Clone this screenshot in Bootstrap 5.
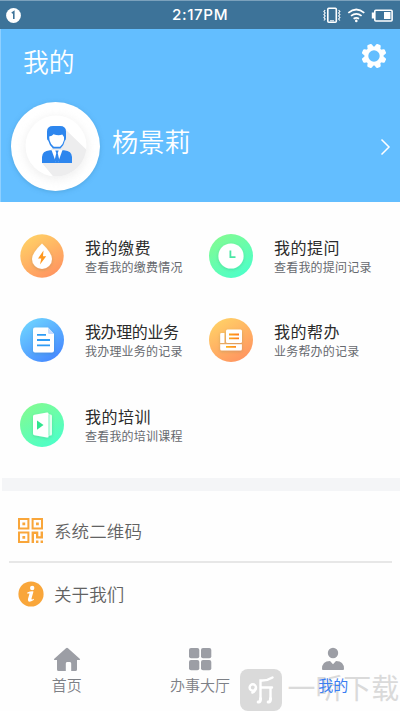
<!DOCTYPE html>
<html lang="zh-CN">
<head>
<meta charset="utf-8">
<meta name="viewport" content="width=device-width, initial-scale=1">
<title>我的</title>
<link href="https://cdn.jsdelivr.net/npm/bootstrap@5.3.0/dist/css/bootstrap.min.css" rel="stylesheet">
<style>
body{font-family:"Noto Sans CJK SC",sans-serif;width:400px;height:711px;overflow:hidden;background:#fefefe;line-height:1}
svg{display:block;flex:none}
.status{height:29px;background:#3d7399;border-top:1px solid #7ba1bc;padding:0 7px 0 6px}
.notice{width:166px}
.clock{font:500 15.2px/20px Inter,sans-serif;letter-spacing:.6px}
.hero{height:173px;background:#63beff;border-left:1px solid #8fd0ff}
.hero-title{font-size:25.8px;font-weight:350;line-height:30px;padding:17px 13px 0 22px}
.gear{margin-top:-3px}
.profile{padding:26px 9px 0 10px}
.hero-name{font-size:26.2px;font-weight:350;line-height:30px;margin:-11px 0 0 12px}
.avatar{width:89px;height:89px;background:#fff;box-shadow:0 1px 4px #3f91c580}
.tiles{height:276px;padding:31.5px 0 0 20px}
.tile{height:84.5px}
.tile-col{width:189px}
.tile-text{padding:3px 0 0 21px}
.tile-title{font-size:16px;line-height:20px;color:#2b2b2b;letter-spacing:.5px}
.tile-title.tight{letter-spacing:-.4px}
.tile-sub{font-size:12px;line-height:19px;color:#66696e;letter-spacing:.2px}
.band{height:13px;background:#f4f5f7;margin-left:2px}
.entry{font-size:17.5px;color:#626262;letter-spacing:.1px;padding-left:9px}
.entry span{margin-left:11px;font-weight:350}
.rule{border-bottom:2px solid #e7e7e7;height:72px;padding:10px 0 1px 9px}
.about{height:62px}
.about span{margin-left:10px}
.entries{height:136px;margin:0 8px 0 9px}
.tabs{height:84px}
.tab{width:133.3px;padding-top:20px;font-size:15px;color:#7d8086;line-height:20px}
.tab svg{margin-bottom:4px}
.tab.on{color:#3b7ff2}
.tab span{position:relative;z-index:2;font-weight:350}
.tab.on span{font-weight:400}
.watermark{position:absolute;left:240px;top:669px;height:42px;z-index:1;color:#dadada;font-size:27.9px}
.wm-text{margin:-5px 0 0 5.5px}
</style>
<script src="https://cdn.jsdelivr.net/npm/bootstrap@5.3.0/dist/js/bootstrap.bundle.min.js"></script>
</head>
<body class="position-relative">
<div class="status d-flex align-items-center text-white">
  <div class="notice"><svg width="15" height="15" viewBox="0 0 15 15"><circle cx="7.5" cy="7.5" r="7.4" fill="#fff"/><path d="M5.8 5.2 7.8 3.8V11" fill="none" stroke="#3d7399" stroke-width="1.6"/></svg></div>
  <div class="clock">2:17PM</div>
  <svg class="ms-auto" width="70" height="17" viewBox="323 6 70 17" fill="none" stroke="#fff">
    <rect x="327.8" y="7.3" width="8.5" height="14" rx="1" stroke-width="1.6"/><path d="M330 19.8h4" stroke-width="1"/>
    <path d="M325.2 9l-1.300 1.500 1.300 1.500-1.300 1.500 1.300 1.500-1.300 1.500 1.300 1.500-1.300 1.500M338.600 9l1.300 1.500-1.300 1.500 1.300 1.500-1.300 1.500 1.300 1.500-1.300 1.500 1.300 1.500" stroke-width="1.1"/>
    <path d="M348.300 11.800q8-6.600 16 0M351 14.900q5.300-4.200 10.600 0M353.600 17.800q2.700-2 5.400 0" stroke-width="1.7"/><circle cx="356.3" cy="19.9" r="1.3" fill="#fff" stroke="none"/>
    <rect x="374.8" y="9.2" width="17.3" height="10.8" rx="1" stroke-width="1.6"/><path d="M373 11.500v6" stroke-width="2.4"/><path fill="#fff" stroke="none" d="M384 11h6.500v7H384z"/>
  </svg>
</div>
<header class="hero text-white">
  <div class="d-flex justify-content-between hero-title">
    <div>我的</div>
    <svg class="gear" width="26" height="26" viewBox="-13 -13 26 26" fill="#fff">
      <defs><path id="tooth" d="M-3.600-7-2.600-11.200Q-2.300-12.400-1.400-12.400H1.400Q2.300-12.400 2.600-11.200L3.600-7z"/></defs>
      <g transform="rotate(22.5)"><use href="#tooth"/><use href="#tooth" transform="rotate(45)"/><use href="#tooth" transform="rotate(90)"/><use href="#tooth" transform="rotate(135)"/><use href="#tooth" transform="rotate(180)"/><use href="#tooth" transform="rotate(225)"/><use href="#tooth" transform="rotate(270)"/><use href="#tooth" transform="rotate(315)"/></g>
      <circle r="7.6" fill="none" stroke="#fff" stroke-width="3.8"/>
    </svg>
  </div>
  <div class="d-flex align-items-center profile">
    <div class="avatar rounded-circle d-flex align-items-center justify-content-center">
      <svg width="89" height="89" viewBox="11 102 89 89">
        <defs><filter id="soft" x="-30%" y="-30%" width="160%" height="160%"><feGaussianBlur stdDeviation="4"/></filter><clipPath id="disc"><circle cx="56" cy="146" r="30.5"/></clipPath></defs>
        <circle cx="56" cy="148" r="32" fill="#e8e8e8" filter="url(#soft)" opacity=".6"/><circle cx="56" cy="146" r="30.5" fill="#fff"/>
        <path clip-path="url(#disc)" d="M65 129l30 29v35H67L42 163z" fill="#ededee"/>
        <path d="M47 131.500Q47 126 53 126H60Q66 126 66 131.500V138q0 2-1.200 2.800Q64 145.500 60.500 148.500H53Q49.300 145.500 48.300 140.800 47 140 47 138z" fill="#2d86ee"/>
        <path d="M49.200 136.500q3-.2 4.300-2.300 5 1.800 8.800.3L64 137v3q-1 4.500-4 6.800h-6.200q-3.300-2.500-4.300-6.800z" fill="#fff"/>
        <path d="M42 163v-6q0-6 8-6.800h14q8 .8 8 6.800v6z" fill="#2d86ee"/><path d="M51.500 150l4.500 12.500h2L62.500 150z" fill="#fff"/><path d="M55.300 150.500h3.400l-1 2.500 1.600 7-1.300 3h-2l-1.300-3 1.600-7z" fill="#2d86ee"/>
      </svg>
    </div>
    <div class="hero-name">杨景莉</div>
    <svg class="ms-auto" width="11" height="18" viewBox="0 0 11 18"><path d="M1.500 1.500 9 9l-7.500 7.500" fill="none" stroke="#fff" stroke-width="1.5"/></svg>
  </div>
</header>
<svg width="0" height="0" class="position-absolute"><defs>
  <linearGradient id="or" x1=".2" y1="0" x2=".8" y2="1"><stop stop-color="#ffd267"/><stop offset="1" stop-color="#ff9260"/></linearGradient>
  <linearGradient id="gr" x1=".2" y1="0" x2=".8" y2="1"><stop stop-color="#83fb91"/><stop offset="1" stop-color="#4affcb"/></linearGradient>
  <linearGradient id="bl" x1=".15" y1="0" x2=".85" y2="1"><stop stop-color="#70d6ff"/><stop offset="1" stop-color="#4384ff"/></linearGradient>
  <linearGradient id="ol" x2="1"><stop stop-color="#ffb219"/><stop offset="1" stop-color="#ff7c1c"/></linearGradient>
  <filter id="sh" x="-30%" y="-30%" width="160%" height="160%"><feDropShadow dx="0" dy="1" stdDeviation="1.5" flood-color="#26604b" flood-opacity=".2"/></filter>
</defs></svg>
<main>
<section class="tiles">
  <div class="d-flex flex-wrap">
    <div class="tile-col tile d-flex">
      <svg width="44" height="44" viewBox="-22 -22 44 44"><circle r="21.7" fill="url(#or)"/><path filter="url(#sh)" d="M0-12.500Q10-3 10 3A10 10 0 0 1-10 3Q-10-3 0-12.500z" fill="#fff"/><path d="M1.500-5.500-4 2.500h3.300L-2 8.500 4.200.3H1z" fill="#ff981f"/></svg>
      <div class="tile-text"><div class="tile-title">我的缴费</div><div class="tile-sub">查看我的缴费情况</div></div>
    </div>
    <div class="tile-col tile d-flex">
      <svg width="44" height="44" viewBox="-22 -22 44 44"><circle r="22" fill="url(#gr)"/><circle filter="url(#sh)" r="12.6" fill="#fff"/><path d="M-.6-5.500v6.700H4.500" fill="none" stroke="#4be6a4" stroke-width="1.8"/></svg>
      <div class="tile-text"><div class="tile-title">我的提问</div><div class="tile-sub">查看我的提问记录</div></div>
    </div>
    <div class="tile-col tile d-flex">
      <svg width="44" height="44" viewBox="-22 -22 44 44"><circle r="22" fill="url(#bl)"/><path filter="url(#sh)" d="M-7-12.500H6L12-6V10.500a2 2 0 0 1-2 2H-7a2 2 0 0 1-2-2v-21a2 2 0 0 1 2-2z" fill="#fff"/><path d="M6-12.500 12-6H7.500A1.500 1.500 0 0 1 6-7.500z" fill="#c6dcff"/><path d="M-5-5.200h9M-5 0H8M-5 5.400H8" stroke="#2f9cf5" stroke-width="1.8"/></svg>
      <div class="tile-text"><div class="tile-title tight">我办理的业务</div><div class="tile-sub">我办理业务的记录</div></div>
    </div>
    <div class="tile-col tile d-flex">
      <svg width="44" height="44" viewBox="-22 -22 44 44"><circle r="22" fill="url(#or)"/><g filter="url(#sh)" fill="#fff"><rect x="-5" y="-10.5" width="16" height="13.5" rx="1.5"/><path d="M-9.500-7h2.900V3h-4.200v-8.700Q-10.800-7-9.500-7z"/><path d="M-10.800 4.300h21.700v4.700a1.500 1.500 0 0 1-1.500 1.500H-9.300A1.500 1.500 0 0 1-10.800 9z"/></g><path fill="url(#ol)" d="M-2-6.400H8v1.800H-2zM-2-2.500H8v1.800H-2zM-5 6H5v1.800H-5z"/></svg>
      <div class="tile-text"><div class="tile-title">我的帮办</div><div class="tile-sub">业务帮办的记录</div></div>
    </div>
    <div class="tile-col tile d-flex">
      <svg width="44" height="44" viewBox="-22 -22 44 44"><circle r="22" fill="url(#gr)"/><g filter="url(#sh)"><path d="M5-10.500H8.500A1.500 1.500 0 0 1 10-9V9a1.500 1.500 0 0 1-1.500 1.500H5z" fill="#dfffee"/><path d="M-9-8.500Q-9-10-7.500-10.300L5-12.500a1.300 1.300 0 0 1 1.500 1.500V11A1.300 1.300 0 0 1 5 12.500L-7.500 10.300Q-9 10-9 8.500z" fill="#fff"/></g><path d="M-5-4.500 1.500 0-5 4.700z" fill="#30e58e"/><path d="M7-10V10" stroke="#6bf5b4" stroke-width=".8"/></svg>
      <div class="tile-text"><div class="tile-title">我的培训</div><div class="tile-sub">查看我的培训课程</div></div>
    </div>
  </div>
</section>
<div class="band"></div>
<section class="entries">
  <div class="entry rule d-flex align-items-center">
    <svg width="25" height="25" viewBox="0 0 25 25"><g fill="none" stroke="#f9a63a" stroke-width="2"><path d="M1 1h9.400v9.400H1zM14.600 1H24v9.400h-9.400zM1 14.600h9.400V24H1z"/></g><path fill="#f9a63a" d="M4.400 4.400h2.800v2.800H4.400zM18 4.400h2.800v2.800H18zM4.400 18h2.800v2.800H4.400zM13.600 13.600h6.700v4.600H22.600v-4.600H25v6.800h-7v-4.400h-2V25h-2.400zM18 22.600h2.400V25H18zM22.600 22.600H25V25h-2.400z"/></svg>
    <span>系统二维码</span>
  </div>
  <div class="entry about d-flex align-items-center">
    <svg width="26" height="26" viewBox="-13 -13 26 26"><circle r="12.6" fill="#f9a63a"/><circle cx="1.2" cy="-6" r="2.2" fill="#fff"/><path d="M-3.700-1.600Q0-3 2.500-2.600L.5 4.600q-.3 1.700 2.500.1L2.700 6Q-3.300 9.800-3.100 5.200L-1.500-.5h-2.400z" fill="#fff"/></svg>
    <span>关于我们</span>
  </div>
</section>
</main>
<nav class="tabs d-flex">
  <div class="tab d-flex flex-column align-items-center">
    <svg width="28" height="24" viewBox="0 0 28 24"><path d="M13 1.200q1-.8 2 0L27 12q.5 1-.8 1H24v9.500q0 1.500-1.500 1.500h-4.300v-7.500q0-1.500-1.200-1.500h-3q-1.200 0-1.200 1.500V24H5.500Q4 24 4 22.500V13H1.800Q.5 13 1 12z" fill="#9c9ea5"/></svg><span>首页</span>
  </div>
  <div class="tab d-flex flex-column align-items-center">
    <svg width="24" height="24" viewBox="0 0 24 24" fill="#9c9ea5"><rect x="1" y="1" width="10.3" height="10.3" rx="2"/><rect x="13" y="1" width="10.3" height="10.3" rx="2"/><rect x="1" y="13" width="10.3" height="10.3" rx="2"/><rect x="13" y="13" width="10.3" height="10.3" rx="2"/></svg><span>办事大厅</span>
  </div>
  <div class="tab on d-flex flex-column align-items-center">
    <svg width="24" height="24" viewBox="0 0 24 24" fill="#9c9ea5"><circle cx="12" cy="6" r="5.2"/><path d="M1 22q0-8 8-8l3 3.200L15 14q8 0 8 8 0 1-1 1H2q-1 0-1-1z"/></svg><span>我的</span>
  </div>
</nav>
<div class="watermark d-flex align-items-center">
  <svg width="42" height="42" viewBox="0 0 42 42" fill="none" stroke="#fff" stroke-width="2.4" stroke-linecap="round"><rect width="42" height="42" rx="8" fill="#dadada" stroke="none"/><circle cx="12.8" cy="18.5" r="3.2"/><path d="M15.900 19q-.5 3.500-3.500 4.500M32.500 8.500Q27 12 20.500 11.500V30M21 18.500h11M30.500 18.500V30"/><path d="M20.500 29.500q0 4-2.300 3.500M30.500 29.500q0 4-2.300 3.500" stroke-width="3"/></svg>
  <div class="wm-text">一听下载</div>
</div>
</body>
</html>
